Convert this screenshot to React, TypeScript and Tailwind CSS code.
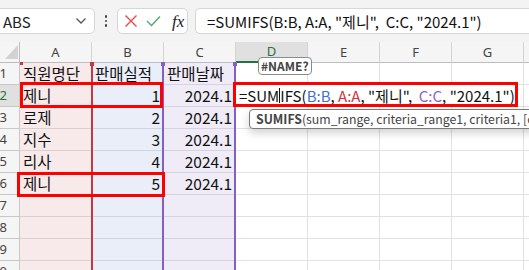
import React from "react";

const cols = ["A", "B", "C", "D", "E", "F", "G", "H"];

const rows: { a?: string; b?: string; c?: string }[] = [
  { a: "직원명단", b: "판매실적", c: "판매날짜" },
  { a: "제니", b: "1", c: "2024.1" },
  { a: "로제", b: "2", c: "2024.1" },
  { a: "지수", b: "3", c: "2024.1" },
  { a: "리사", b: "4", c: "2024.1" },
  { a: "제니", b: "5", c: "2024.1" },
  {},
  {},
  {},
  {},
];

const tint: Record<string, string> = {
  A: "bg-[#f8eaea] border-[#dccfcf]",
  B: "bg-[#e9eef8] border-[#cfd5df]",
  C: "bg-[#efebf7] border-[#d6d2df]",
};

const font = { fontFamily: '"Noto Sans CJK KR", "Noto Sans", sans-serif' };

export default function App() {
  return (
    <div className="w-[529px] h-[270px] overflow-hidden bg-white relative" style={font}>
      {/* TOOLBAR */}
      <div className="h-[42px] bg-[#f3f3f3] flex items-center gap-0">
        <div className="ml-[-8px] w-[103px] h-[26px] bg-white border border-[#d6d6d6] rounded-[5px] flex items-center justify-between pl-[10px] pr-[7px]">
          <span className="text-[15px] text-[#222] leading-none">ABS</span>
          <svg width="12" height="8" viewBox="0 0 12 8">
            <path d="M1.5 1.5 L6 6 L10.5 1.5" fill="none" stroke="#555" strokeWidth="1.3" />
          </svg>
        </div>
        <div className="w-[22px] flex flex-col items-center gap-[2px]">
          <div className="w-[2.5px] h-[2.5px] bg-[#444] rounded-full" />
          <div className="w-[2.5px] h-[2.5px] bg-[#444] rounded-full" />
          <div className="w-[2.5px] h-[2.5px] bg-[#444] rounded-full" />
        </div>
        <div className="w-[71px] h-[26px] bg-white border border-[#d6d6d6] rounded-[5px] flex items-center pl-[6px] gap-[8px]">
          <svg width="14" height="14" viewBox="0 0 14 14">
            <path d="M1.5 1.5 L12.5 12.5 M12.5 1.5 L1.5 12.5" stroke="#e5484d" strokeWidth="1.4" />
          </svg>
          <svg width="15" height="12" viewBox="0 0 15 12">
            <path d="M1 6 L5.5 10.5 L14 1.5" fill="none" stroke="#4caf6a" strokeWidth="1.4" />
          </svg>
          <span className="text-[17px] italic text-[#222] leading-none ml-[3px]" style={{ fontFamily: '"Liberation Serif", serif' }}>
            fx
          </span>
        </div>
        <div className="ml-[7px] flex-1 h-[26px] bg-white border border-[#d6d6d6] rounded-l-[5px] border-r-0 flex items-center pl-[11px]">
          <span className="text-[15px] text-[#111] whitespace-pre leading-none">
            {'=SUMIFS(B:B, A:A, "제니",  C:C, "2024.1")'}
          </span>
        </div>
      </div>

      {/* GRID */}
      <div className="relative">
        {/* header row */}
        <div className="flex h-[21px] bg-[#f5f5f5]">
          <div className="w-[20px] shrink-0 border-r border-b border-[#bdbdbd] relative">
            <svg className="absolute left-[5px] top-[3px]" width="13" height="14" viewBox="0 0 13 14">
              <path d="M13 0 L13 14 L0 14 Z" fill="#d2d2d2" />
            </svg>
          </div>
          {cols.map((c) => (
            <div
              key={c}
              className={`w-[72px] shrink-0 border-r border-[#d4d4d4] flex items-center justify-center text-[13px] leading-none ${
                c === "D"
                  ? "bg-[#e0e0e0] text-[#217346] border-b-2 border-b-[#217346]"
                  : "text-[#444] border-b border-b-[#bdbdbd]"
              }`}
              style={{ fontFamily: '"Noto Sans", sans-serif' }}
            >
              {c}
            </div>
          ))}
        </div>

        {rows.map((r, i) => (
          <div key={i} className="flex h-[22px]">
            <div
              className={`w-[20px] shrink-0 border-r border-b border-[#c8c8c8] flex items-center justify-end pr-[12px] text-[13px] leading-none ${
                i === 1 ? "bg-[#e0e0e0] text-[#217346]" : "bg-[#f5f5f5] text-[#444]"
              }`}
              style={{ fontFamily: '"Noto Sans", sans-serif' }}
            >
              {i + 1}
            </div>
            {cols.map((c) => {
              const v = c === "A" ? r.a : c === "B" ? r.b : c === "C" ? r.c : undefined;
              const right = i > 0 && (c === "B" || c === "C");
              return (
                <div
                  key={c}
                  className={`w-[72px] shrink-0 border-r border-b flex items-center text-[15.5px] leading-none text-[#111] ${
                    tint[c] ?? "bg-white border-[#e1e1e1]"
                  } ${right ? "justify-end pr-[3px]" : "pl-[3px]"}`}
                >
                  {v}
                </div>
              );
            })}
          </div>
        ))}

        {/* range borders from the formula */}
        <div className="absolute left-[91px] top-[21px] w-[2px] h-[230px] bg-[#c8363f]" />
        <div className="absolute left-[162px] top-[21px] w-[2px] h-[230px] bg-[#8660c0]" />
        <div className="absolute left-[234px] top-[21px] w-[2px] h-[230px] bg-[#8660c0]" />
        <div className="absolute left-[20px] top-[20px] w-[3px] h-[3px] bg-[#c8363f]" />
        <div className="absolute left-[90px] top-[20px] w-[4px] h-[4px] bg-[#c8363f]" />
        <div className="absolute left-[161px] top-[20px] w-[4px] h-[4px] bg-[#8660c0]" />
        <div className="absolute left-[233px] top-[20px] w-[4px] h-[4px] bg-[#8660c0]" />

        {/* cell in edit mode */}
        <div className="absolute left-[236px] top-[43px] w-[280px] h-[21px] bg-white flex items-center pl-[3px] text-[15px] leading-none text-[#111] whitespace-pre">
          <span className="border-r border-[#111]">=SUM</span>
          <span>IFS(</span>
          <span className="text-[#3f6fd0]">B:B</span>
          <span>, </span>
          <span className="text-[#d0343f]">A:A</span>
          <span>{', "제니",  '}</span>
          <span className="text-[#8d5fd3]">C:C</span>
          <span>{', "2024.1")'}</span>
        </div>

        {/* #NAME? badge */}
        <div className="absolute left-[258px] top-[15px] h-[18px] px-[2px] bg-white border border-[#8a8a8a] rounded-[4px] flex items-center text-[12px] font-bold text-[#444] leading-none">
          #NAME?
        </div>

        {/* function tooltip */}
        <div className="absolute left-[249px] top-[67px] w-[300px] h-[20px] bg-white border border-[#7a7a7a] rounded-[4px] shadow-[0_4px_8px_rgba(0,0,0,0.18)] flex items-center pl-[6px] text-[12.3px] text-[#444] whitespace-nowrap leading-none overflow-hidden">
          <span className="font-bold">SUMIFS</span>
          <span>(sum_range, criteria_range1, criteria1, [criteria_range2, ...])</span>
        </div>

        {/* red annotation boxes */}
        <div className="absolute left-[20px] top-[40px] w-[143px] h-[26px] border-[3px] border-[#ff0000]" />
        <div className="absolute left-[17px] top-[130px] w-[148px] h-[25px] border-[3px] border-[#ff0000]" />
        <div className="absolute left-[233px] top-[40px] w-[285px] h-[25px] border-[3px] border-[#ff0000]" />
      </div>
    </div>
  );
}
